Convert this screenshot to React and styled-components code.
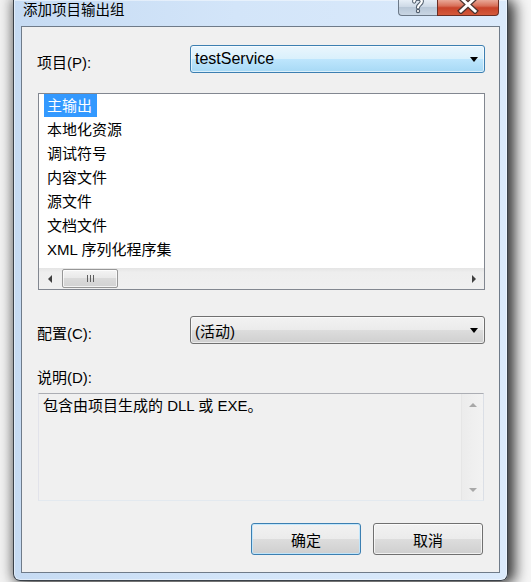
import React from 'react'
import styled, { createGlobalStyle } from 'styled-components'

const GlobalStyle = createGlobalStyle`
  html, body {
    margin: 0;
    padding: 0;
    background: #ffffff;
  }
  body {
    font-family: "Liberation Sans", "Noto Sans CJK SC", sans-serif;
    overflow: hidden;
    color: #000;
  }
`

const items = ['主输出', '本地化资源', '调试符号', '内容文件', '源文件', '文档文件', 'XML 序列化程序集']

function App() {
    return (
        <Screen>
            <GlobalStyle />
            <Window>
                <TitleBar>
                    <TitleText>添加项目输出组</TitleText>
                    <CaptionButtons>
                        <HelpButton>
                            <svg width="14" height="15" viewBox="0 0 14 15">
                                <path d="M3.2 2.6 C3.2 -1.4 10.8 -1.4 10.8 2.6 C10.8 5.4 7 5.2 7 8.4" fill="none" stroke="#4f5c6b" strokeWidth="4.2" strokeLinecap="round" />
                                <circle cx="7" cy="12" r="2.2" fill="#4f5c6b" />
                                <path d="M3.2 2.6 C3.2 -1.4 10.8 -1.4 10.8 2.6 C10.8 5.4 7 5.2 7 8.4" fill="none" stroke="#ffffff" strokeWidth="2.2" strokeLinecap="round" />
                                <circle cx="7" cy="12" r="1.1" fill="#ffffff" />
                            </svg>
                        </HelpButton>
                        <CloseButton>
                            <svg width="22" height="14" viewBox="0 0 22 14">
                                <path d="M4 -2 L18 11 M18 -2 L4 11" stroke="#4b3430" strokeWidth="5.5" strokeLinecap="square" />
                                <path d="M4 -2 L18 11 M18 -2 L4 11" stroke="#ffffff" strokeWidth="3" strokeLinecap="square" />
                            </svg>
                        </CloseButton>
                    </CaptionButtons>
                </TitleBar>

                <Client>
                    <FieldRow>
                        <FieldLabel>项目(P):</FieldLabel>
                        <ComboBox $focused>
                            <ComboText $latin>testService</ComboText>
                            <DropArrow />
                        </ComboBox>
                    </FieldRow>

                    <ListBox>
                        <ListRows>
                            {items.map((item, index) => (
                                <ListItem key={index}>
                                    <ItemText $selected={index === 0}>{item}</ItemText>
                                </ListItem>
                            ))}
                        </ListRows>
                        <HScroll>
                            <ScrollArrow>
                                <ArrowLeft />
                            </ScrollArrow>
                            <Thumb>
                                <Grip /><Grip /><Grip />
                            </Thumb>
                            <TrackSpace />
                            <ScrollArrow>
                                <ArrowRight />
                            </ScrollArrow>
                        </HScroll>
                    </ListBox>

                    <FieldRow $gap={26}>
                        <FieldLabel>配置(C):</FieldLabel>
                        <ComboBox>
                            <ComboText>(活动)</ComboText>
                            <DropArrow />
                        </ComboBox>
                    </FieldRow>

                    <DescLabel>说明(D):</DescLabel>
                    <DescBox>
                        <DescText>包含由项目生成的 DLL 或 EXE。</DescText>
                        <VScroll>
                            <ScrollArrow>
                                <ArrowUp />
                            </ScrollArrow>
                            <ScrollArrow>
                                <ArrowDown />
                            </ScrollArrow>
                        </VScroll>
                    </DescBox>

                    <ButtonRow>
                        <DialogButton $default>确定</DialogButton>
                        <DialogButton>取消</DialogButton>
                    </ButtonRow>
                </Client>
            </Window>
        </Screen>
    )
}

const Screen = styled.div`
  width: 531px;
  height: 582px;
  overflow: hidden;
  box-sizing: border-box;
  padding-left: 13px;
  background: linear-gradient(to right, #f2f2f2 0%, #f6f6f6 50%, #f6f6f6 100%);
`

const Window = styled.div`
  box-sizing: border-box;
  width: 495px;
  height: 581px;
  border: 1px solid #3a4149;
  border-top: none;
  border-radius: 0 0 7px 7px;
  padding: 0 7px 7px;
  display: flex;
  flex-direction: column;
  background: linear-gradient(to right, #c6dbf3 0%, #d3e5f9 45%, #dbeafb 100%);
  box-shadow: 0 0 12px 2px rgba(0, 0, 0, 0.45), 8px 2px 14px rgba(0, 0, 0, 0.6),
    inset 0 0 0 1px rgba(255, 255, 255, 0.45);
`

const TitleBar = styled.div`
  height: 26px;
  flex-shrink: 0;
  display: flex;
  align-items: flex-start;
  justify-content: space-between;
  padding: 0 1px;
`

const TitleText = styled.div`
  font-size: 14.5px;
  line-height: 20px;
  padding-left: 1px;
  color: #000;
`

const CaptionButtons = styled.div`
  display: flex;
  height: 16px;
`

const HelpButton = styled.div`
  box-sizing: border-box;
  width: 39px;
  height: 16px;
  border: 1px solid #6c7988;
  border-top: none;
  border-right: none;
  border-radius: 0 0 0 4px;
  background: linear-gradient(#e6eef7 0%, #cdd9e6 45%, #b8c7d7 50%, #c9d6e4 100%);
  display: flex;
  align-items: flex-end;
  justify-content: center;
  overflow: hidden;

  svg {
    margin-bottom: 1px;
  }
`

const CloseButton = styled.div`
  box-sizing: border-box;
  width: 62px;
  height: 16px;
  border: 1px solid #6a2e24;
  border-top: none;
  border-radius: 0 0 4px 0;
  background: linear-gradient(#e9a898 0%, #d86f58 40%, #c8432a 52%, #d45a3c 100%);
  display: flex;
  align-items: flex-start;
  justify-content: center;
  overflow: hidden;
`

const Client = styled.div`
  flex: 1;
  border: 1px solid #6f7b89;
  background: #f0f0f0;
  padding: 18px 14px 0 16px;
  display: flex;
  flex-direction: column;
`

const FieldRow = styled.div`
  display: flex;
  align-items: flex-start;
  justify-content: space-between;
  height: 28px;
  flex-shrink: 0;
  margin-top: ${props => props.$gap || 0}px;
`

const FieldLabel = styled.div`
  font-size: 15px;
  line-height: 20px;
  padding-top: 8px;
  margin-left: -1px;
`

const ComboBox = styled.div`
  box-sizing: border-box;
  width: 295px;
  height: 28px;
  border: 1px solid ${props => props.$focused ? '#3c7fb1' : '#707070'};
  border-radius: 3px;
  background: ${props => props.$focused
        ? 'linear-gradient(#eaf6fd 0%, #d9f0fc 50%, #bee6fd 50%, #a7d9f5 100%)'
        : 'linear-gradient(#f2f2f2 0%, #ebebeb 50%, #dddddd 50%, #cfcfcf 100%)'};
  box-shadow: inset 0 0 0 1px rgba(255, 255, 255, 0.6);
  display: flex;
  align-items: center;
  justify-content: space-between;
  padding: 0 6px 0 4px;
`

const ComboText = styled.span`
  font-size: ${props => props.$latin ? 16 : 15}px;
`

const DropArrow = styled.span`
  width: 0;
  height: 0;
  border-left: 4px solid transparent;
  border-right: 4px solid transparent;
  border-top: 5px solid #000;
`

const ListBox = styled.div`
  box-sizing: border-box;
  margin-top: 20px;
  height: 197px;
  flex-shrink: 0;
  border: 1px solid #828790;
  background: #fff;
  display: flex;
  flex-direction: column;
`

const ListRows = styled.div`
  flex: 1;
`

const ListItem = styled.div`
  height: 24px;
  padding-left: 5px;
  display: flex;
  align-items: flex-start;
`

const ItemText = styled.span`
  display: inline-block;
  height: 23px;
  line-height: 23px;
  padding: 0 5px 0 3px;
  font-size: 15px;
  background: ${props => props.$selected ? '#3399ff' : 'transparent'};
  color: ${props => props.$selected ? '#fff' : '#000'};
`

const HScroll = styled.div`
  height: 21px;
  display: flex;
  align-items: center;
  background: linear-gradient(#e4e4e4 0%, #eeeeee 20%, #f0f0f0 100%);
`

const ScrollArrow = styled.div`
  width: 21px;
  height: 21px;
  flex-shrink: 0;
  display: flex;
  align-items: center;
  justify-content: center;
`

const ArrowLeft = styled.span`
  width: 0;
  height: 0;
  border-top: 4px solid transparent;
  border-bottom: 4px solid transparent;
  border-right: 4px solid #404040;
`

const ArrowRight = styled.span`
  width: 0;
  height: 0;
  border-top: 4px solid transparent;
  border-bottom: 4px solid transparent;
  border-left: 4px solid #404040;
`

const ArrowUp = styled.span`
  width: 0;
  height: 0;
  border-left: 4px solid transparent;
  border-right: 4px solid transparent;
  border-bottom: 4px solid #a8a8a8;
`

const ArrowDown = styled.span`
  width: 0;
  height: 0;
  border-left: 4px solid transparent;
  border-right: 4px solid transparent;
  border-top: 4px solid #a8a8a8;
`

const Thumb = styled.div`
  box-sizing: border-box;
  width: 56px;
  height: 19px;
  margin-left: 2px;
  border: 1px solid #979797;
  border-radius: 2px;
  background: linear-gradient(#f4f4f4 0%, #e8e8e8 50%, #dadada 50%, #d2d2d2 100%);
  box-shadow: inset 0 0 0 1px rgba(255, 255, 255, 0.7);
  display: flex;
  align-items: center;
  justify-content: center;
  gap: 2px;
`

const Grip = styled.span`
  width: 1px;
  height: 7px;
  background: #5e5e5e;
`

const TrackSpace = styled.div`
  flex: 1;
`

const DescLabel = styled.div`
  margin-top: 24px;
  font-size: 15px;
  line-height: 20px;
  margin-left: -1px;
`

const DescBox = styled.div`
  box-sizing: border-box;
  margin-top: 5px;
  height: 108px;
  flex-shrink: 0;
  margin-right: 1px;
  border: 1px solid;
  border-color: #abadb3 #dbdfe6 #e3e9ef #e2e3ea;
  background: #f0f0f0;
  display: flex;
`

const DescText = styled.div`
  flex: 1;
  padding: 2px 4px;
  font-size: 15px;
  line-height: 20px;
`

const VScroll = styled.div`
  width: 21px;
  display: flex;
  flex-direction: column;
  justify-content: space-between;
  border-left: 1px solid #e6e6e6;
  background: linear-gradient(to right, #ececec, #f2f2f2);
`

const ButtonRow = styled.div`
  margin-top: 22px;
  display: flex;
  justify-content: flex-end;
  gap: 12px;
  padding-right: 2px;
`

const DialogButton = styled.div`
  box-sizing: border-box;
  width: 110px;
  height: 32px;
  border: 1px solid ${props => props.$default ? '#3c7fb1' : '#707070'};
  border-radius: 3px;
  background: linear-gradient(#f2f2f2 0%, #ebebeb 50%, #dddddd 50%, #cfcfcf 100%);
  box-shadow: inset 0 0 0 1px ${props => props.$default ? 'rgba(190, 230, 253, 0.9)' : 'rgba(255, 255, 255, 0.7)'};
  display: flex;
  align-items: center;
  justify-content: center;
  font-size: 15px;
`

export default App
